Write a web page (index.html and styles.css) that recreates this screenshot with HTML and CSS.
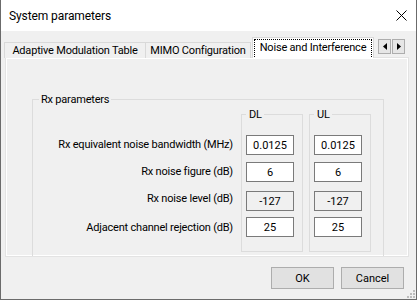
FILE: index.html
```
<!DOCTYPE html>
<html>
    <head>
        <title>System parameters</title>
        <link rel="stylesheet" href="styles.css">
    </head>
    <body>
        <div class="window">
            <div class="titleBar">
                <span class="titleText">System parameters</span>
                <svg class="closeIcon" width="11" height="11" viewBox="0 0 11 11">
                    <path d="M0.5 0.5 L10.5 10.5 M10.5 0.5 L0.5 10.5" stroke="#000" stroke-width="1" fill="none"/>
                </svg>
            </div>

            <div class="client">
                <div class="tabStrip">
                    <div class="tab tabWide">Adaptive Modulation Table</div>
                    <div class="tab tabMid">MIMO Configuration</div>
                    <div class="tab selected"><span class="focusRect">Noise and Interference</span></div>
                    <div class="tabScroll">
                        <div class="scrollButton">
                            <svg width="4" height="7" viewBox="0 0 4 7"><path d="M4 0 L0 3.5 L4 7 Z" fill="#000"/></svg>
                        </div>
                        <div class="scrollButton">
                            <svg width="4" height="7" viewBox="0 0 4 7"><path d="M0 0 L4 3.5 L0 7 Z" fill="#000"/></svg>
                        </div>
                    </div>
                </div>

                <div class="tabPanel">
                    <fieldset class="groupBox rxGroup">
                        <legend>Rx parameters</legend>

                        <div class="labelColumn">
                            <div class="row">Rx equivalent noise bandwidth (MHz)</div>
                            <div class="row">Rx noise figure (dB)</div>
                            <div class="row">Rx noise level (dB)</div>
                            <div class="row">Adjacent channel rejection (dB)</div>
                        </div>

                        <fieldset class="groupBox linkGroup">
                            <legend>DL</legend>
                            <div class="row"><input class="field" type="text" value="0.0125"></div>
                            <div class="row"><input class="field" type="text" value="6"></div>
                            <div class="row"><input class="field readOnly" type="text" value="-127" readonly></div>
                            <div class="row"><input class="field" type="text" value="25"></div>
                        </fieldset>

                        <fieldset class="groupBox linkGroup">
                            <legend>UL</legend>
                            <div class="row"><input class="field" type="text" value="0.0125"></div>
                            <div class="row"><input class="field" type="text" value="6"></div>
                            <div class="row"><input class="field readOnly" type="text" value="-127" readonly></div>
                            <div class="row"><input class="field" type="text" value="25"></div>
                        </fieldset>
                    </fieldset>
                </div>

                <div class="footer">
                    <button class="dialogButton">OK</button>
                    <button class="dialogButton">Cancel</button>
                    <svg class="sizeGrip" width="10" height="10" viewBox="0 0 10 10">
                        <rect x="7" y="1" width="2" height="2" fill="#bcbcbc"/>
                        <rect x="4" y="4" width="2" height="2" fill="#bcbcbc"/>
                        <rect x="7" y="4" width="2" height="2" fill="#bcbcbc"/>
                        <rect x="1" y="7" width="2" height="2" fill="#bcbcbc"/>
                        <rect x="4" y="7" width="2" height="2" fill="#bcbcbc"/>
                        <rect x="7" y="7" width="2" height="2" fill="#bcbcbc"/>
                    </svg>
                </div>
            </div>
        </div>
    </body>
</html>
```

FILE: styles.css
```
body {
    margin: 0;
    background-color: #f0f0f0;
    font-family: Roboto, "Liberation Sans", sans-serif;
    font-size: 11px;
    letter-spacing: -0.2px;
    color: #000;
}

.window {
    width: 417px;
    height: 300px;
    box-sizing: border-box;
    border: 1px solid #6b6b6b;
    border-top: none;
    display: flex;
    flex-direction: column;
    overflow: hidden;
}

.titleBar {
    height: 31px;
    flex: none;
    background-color: #fff;
    display: flex;
    align-items: center;
    justify-content: space-between;
    padding: 0 9px 0 8px;
}

.titleText {
    font-size: 12px;
    letter-spacing: -0.1px;
}

.client {
    flex: 1;
    background-color: #f0f0f0;
    display: flex;
    flex-direction: column;
}

/* tabs */

.tabStrip {
    margin-top: 6px;
    height: 20px;
    display: flex;
    align-items: flex-start;
    padding-left: 3px;
    position: relative;
    z-index: 1;
}

.tab {
    margin-top: 5px;
    height: 15px;
    line-height: 15px;
    box-sizing: content-box;
    border: 1px solid #d9d9d9;
    border-bottom: none;
    border-right: none;
    background-color: #f0f0f0;
    white-space: nowrap;
    text-align: center;
}

.tabWide {
    width: 140px;
}

.tabMid {
    width: 104px;
    border-right: 1px solid #d9d9d9;
}

.tab.selected {
    margin-top: 0;
    width: 122px;
    height: 21px;
    padding: 1px 1px 0 1px;
    box-sizing: border-box;
    border: 1px solid #d9d9d9;
    border-bottom: none;
    margin-left: 1px;
    background-color: #fff;
}

.focusRect {
    display: block;
    height: 18px;
    line-height: 16px;
    border: 1px dotted #000;
    border-bottom: none;
    box-sizing: border-box;
}

.tabScroll {
    display: flex;
    margin-top: 2px;
    margin-left: 4px;
    gap: 1px;
}

.scrollButton {
    width: 13px;
    height: 15px;
    box-sizing: border-box;
    border: 1px solid #adadad;
    background-color: #e6e6e6;
    display: flex;
    align-items: center;
    justify-content: center;
}

.tabPanel {
    margin-left: 4px;
    width: 404px;
    height: 200px;
    box-sizing: border-box;
    border: 1px solid #e3e3e3;
    box-shadow: inset 0 0 0 1px #fff;
    padding: 1px;
    overflow: hidden;
}

/* group boxes */

.groupBox {
    margin: 0;
    border: 1px solid #dcdcdc;
    min-width: 0;
}

.groupBox legend {
    padding: 0 2px;
    line-height: 15px;
    height: 15px;
}

.rxGroup {
    margin: 33px 0 0 25px;
    width: 352px;
    box-sizing: border-box;
    padding: 0 12px 12px 6px;
    display: flex;
    align-items: flex-start;
}

.labelColumn {
    flex: 1;
    padding-top: 28px;
    padding-right: 8px;
    text-align: right;
}

.linkGroup {
    width: 62px;
    box-sizing: border-box;
    padding: 13px 0 14px 4px;
}

.linkGroup + .linkGroup {
    margin-left: 6px;
}

.linkGroup legend {
    padding: 0 2px 0 3px;
}

.row {
    height: 20px;
    line-height: 20px;
    white-space: nowrap;
}

.row + .row {
    margin-top: 6px;
}

.row:nth-child(3) {
    margin-top: 7px;
}

.row:nth-child(4) {
    margin-top: 9px;
}

.labelColumn .row:nth-child(2) {
    margin-top: 7px;
}

.labelColumn .row:nth-child(3) {
    margin-top: 7px;
}

.labelColumn .row:nth-child(4) {
    margin-top: 9px;
}

.field {
    width: 48px;
    height: 20px;
    box-sizing: border-box;
    border: 1px solid #7a7a7a;
    padding: 0;
    margin: 0;
    font-family: inherit;
    font-size: 11px;
    text-align: center;
    background-color: #fff;
    color: #000;
    display: block;
    outline: none;
}

.field.readOnly {
    background-color: #f0f0f0;
}

/* bottom buttons */

.footer {
    flex: 1;
    display: flex;
    justify-content: flex-end;
    align-items: flex-start;
    padding-top: 10px;
}

.dialogButton {
    width: 63px;
    height: 22px;
    margin: 0 0 0 7px;
    padding: 0;
    border: 1px solid #adadad;
    background-color: #e1e1e1;
    font-family: inherit;
    font-size: 11px;
    color: #000;
}

.sizeGrip {
    align-self: flex-end;
    margin-left: 2px;
}
```
